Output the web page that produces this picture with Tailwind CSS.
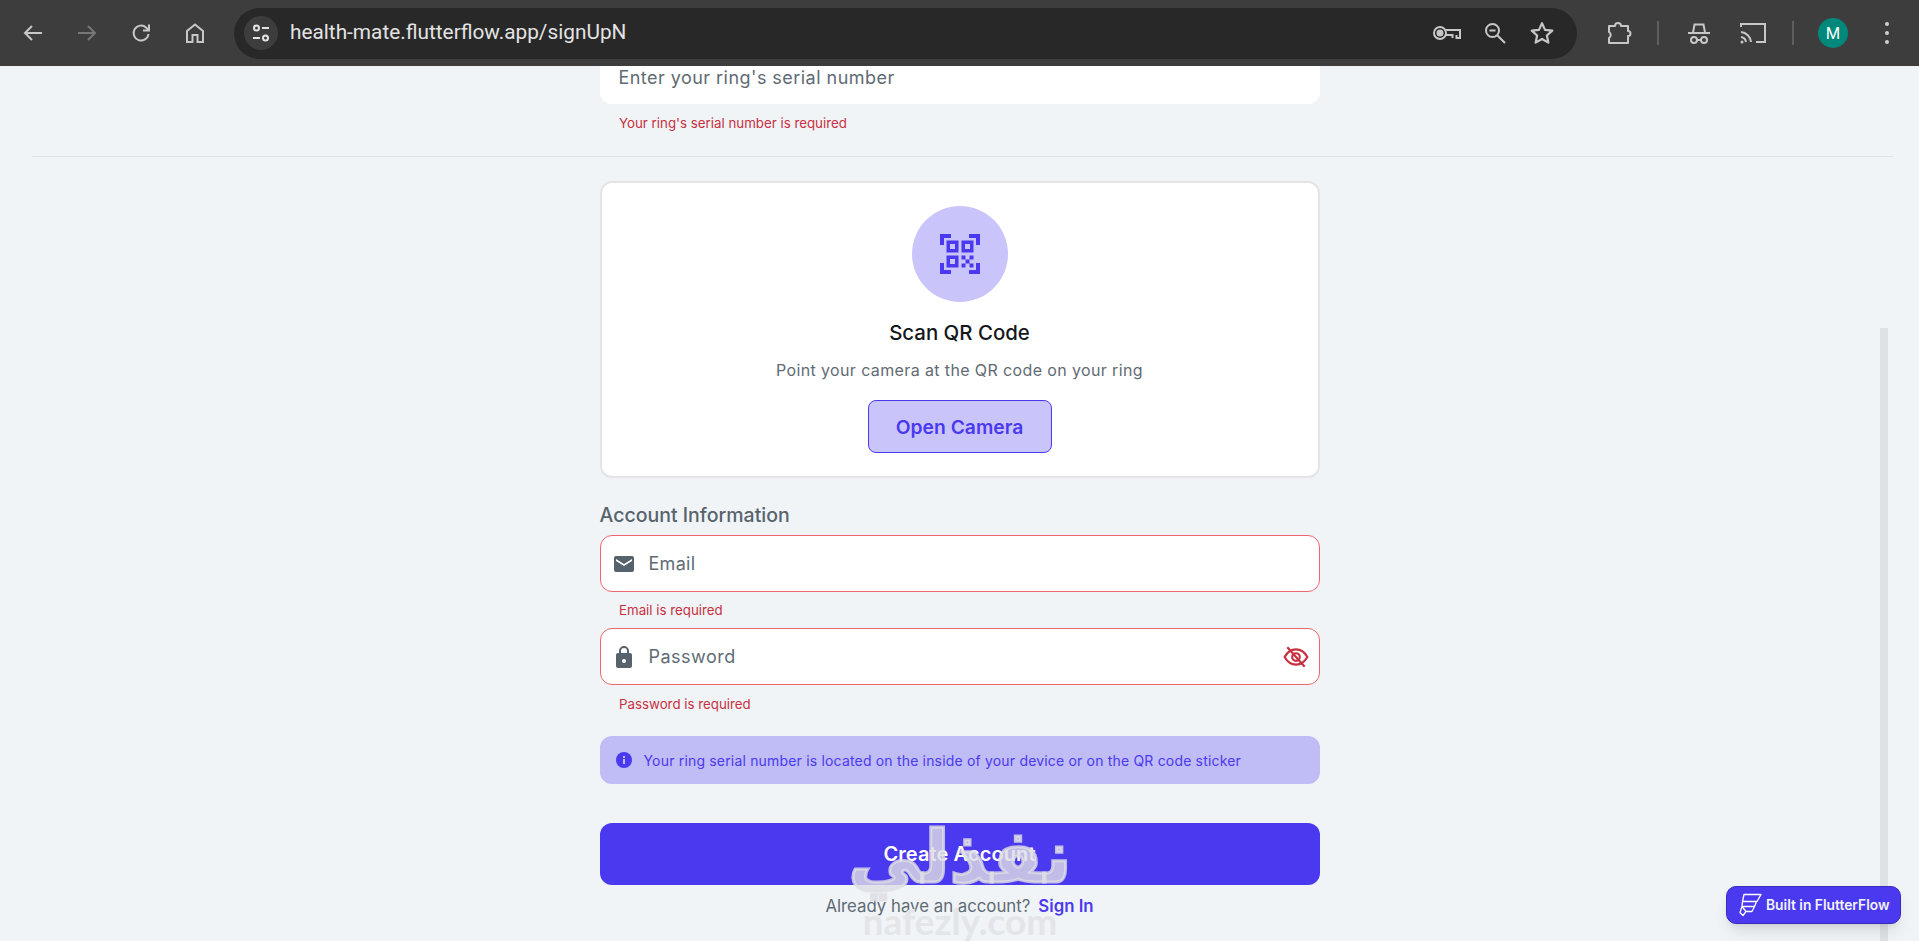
<!DOCTYPE html>
<html lang="en">
<head>
<meta charset="utf-8">
<title>Sign up</title>
<script src="https://cdn.jsdelivr.net/npm/@tailwindcss/browser@4"></script>
</head>
<body class="m-0 h-[941px] w-[1919px] overflow-hidden bg-[#f0f4f7] font-['Inter',sans-serif]">
<header class="flex h-[66px] items-center bg-[#3d3d3d] pl-[6px] text-[#c7c7c7]">
  <div class="flex h-[40px] w-[54px] items-center justify-center">
    <svg class="h-[24px] w-[24px]" viewBox="0 0 24 24" fill="none" stroke="currentColor" stroke-width="2"><path d="M21 12H4M11 5l-7 7 7 7"/></svg>
  </div>
  <div class="flex h-[40px] w-[54px] items-center justify-center text-[#777777]">
    <svg class="h-[24px] w-[24px]" viewBox="0 0 24 24" fill="none" stroke="currentColor" stroke-width="2"><path d="M3 12h17M13 5l7 7-7 7"/></svg>
  </div>
  <div class="flex h-[40px] w-[54px] items-center justify-center">
    <svg class="h-[24px] w-[24px]" viewBox="0 0 24 24" fill="none" stroke="currentColor" stroke-width="2"><path d="M19.500 13a7.500 7.500 0 1 1-2.200-6.300L20 9.200M20 3.500v6h-6"/></svg>
  </div>
  <div class="flex h-[40px] w-[54px] items-center justify-center">
    <svg class="h-[24px] w-[24px]" viewBox="0 0 24 24" fill="none" stroke="currentColor" stroke-width="2"><path d="M4 21V10l8-6.500 8 6.500v11h-5.500v-7h-5v7z"/></svg>
  </div>
  <div class="ml-[12px] flex h-[51px] w-[1343px] items-center rounded-full bg-[#282828] pl-[10px] pr-[12px]">
    <div class="flex h-[34px] w-[34px] items-center justify-center rounded-full bg-[#3d3d3d]">
      <svg class="h-[20px] w-[20px]" viewBox="0 0 20 20" fill="none" stroke="#e3e3e3" stroke-width="2"><circle cx="5.500" cy="5" r="2.500"/><path d="M11 5h7M2 15h7"/><circle cx="14.500" cy="15" r="2.500"/></svg>
    </div>
    <span class="ml-[12px] font-['Roboto',sans-serif] text-[20.800px] text-[#e3e3e3]">health-mate.flutterflow.app/signUpN</span>
    <div class="ml-auto flex items-center">
      <div class="flex h-[40px] w-[49px] items-center justify-center">
        <svg class="h-[16px] w-[28px]" viewBox="0 0 28 16" fill="none" stroke="currentColor" stroke-width="2"><circle cx="7" cy="8" r="6"/><circle cx="7" cy="8" r="2.500" fill="currentColor"/><path d="M13 5h14v8h-3.500v-3M19.500 13v-3H13"/></svg>
      </div>
      <div class="flex h-[40px] w-[47px] items-center justify-center">
        <svg class="h-[24px] w-[24px]" viewBox="0 0 24 24" fill="none" stroke="currentColor" stroke-width="2"><circle cx="9.500" cy="9.500" r="6.500"/><path d="M14.500 14.500L22 22M6.500 9.500h6"/></svg>
      </div>
      <div class="flex h-[40px] w-[47px] items-center justify-center">
        <svg class="h-[26px] w-[26px]" viewBox="0 0 24 24" fill="none" stroke="currentColor" stroke-width="2" stroke-linejoin="round"><path d="M12 3l2.800 6.100 6.700.7-5 4.500 1.400 6.600-5.900-3.400-5.900 3.400 1.400-6.600-5-4.500 6.700-.7z"/></svg>
      </div>
    </div>
  </div>
  <div class="ml-[22px] flex h-[40px] w-[40px] items-center justify-center">
    <svg class="h-[26px] w-[26px]" viewBox="0 0 26 26" fill="none" stroke="currentColor" stroke-width="2" stroke-linejoin="round"><path d="M3 6h6a3 3 0 0 1 6 0h7v5a2.500 2.500 0 0 1 0 5v7H3v-5a3.500 3.500 0 0 0 0-6z"/></svg>
  </div>
  <div class="ml-[18px] h-[24px] w-[2px] bg-[#5e5e5e]"></div>
  <div class="ml-[20px] flex h-[40px] w-[40px] items-center justify-center">
    <svg class="h-[26px] w-[26px]" viewBox="0 0 26 26" fill="none" stroke="currentColor" stroke-width="2"><path d="M2 13h22"/><path d="M7 12.500l1.500-8h9l1.500 8"/><circle cx="8" cy="20" r="3"/><circle cx="18" cy="20" r="3"/><path d="M11 20h4"/></svg>
  </div>
  <div class="ml-[14px] flex h-[40px] w-[40px] items-center justify-center">
    <svg class="h-[28px] w-[28px]" viewBox="0 0 28 28" fill="none" stroke="currentColor" stroke-width="2"><path d="M2 8V5h24v18h-9M2 13a11 11 0 0 1 10 10M2 18a6 6 0 0 1 5 5"/><circle cx="3" cy="23" r="1.500" fill="currentColor" stroke="none"/></svg>
  </div>
  <div class="ml-[19px] h-[24px] w-[2px] bg-[#5e5e5e]"></div>
  <div class="ml-[24px] flex h-[30px] w-[30px] items-center justify-center rounded-full bg-[#00897b] text-[16px] text-white">M</div>
  <div class="ml-[27px] flex w-[24px] flex-col items-center gap-[5px]">
    <span class="h-[4px] w-[4px] rounded-full bg-[#d0d0d0]"></span>
    <span class="h-[4px] w-[4px] rounded-full bg-[#d0d0d0]"></span>
    <span class="h-[4px] w-[4px] rounded-full bg-[#d0d0d0]"></span>
  </div>
</header>

<main class="relative h-[875px] overflow-hidden">
  <div class="absolute bottom-0 left-[1880px] top-[262px] w-[8px] bg-[#dfe2e5]"></div>

  <section class="mx-auto w-[720px]">
    <div class="flex h-[38px] items-start rounded-b-[12px] bg-white pl-[19px] text-[18px] leading-[24px] tracking-[0.46px] text-[#5f6b74]">Enter your ring's serial number</div>
    <p class="ml-[19.500px] mt-[10px] text-[13.300px] leading-[18px] text-[#c8303f]">Your ring's serial number is required</p>
  </section>
  <div class="mx-[32px] mt-[24px] h-px w-[1861px] bg-[#e0e3e7]"></div>

  <section class="mx-auto w-[720px]">
    <div class="mt-[24px] flex h-[297px] flex-col items-center rounded-[12px] border-2 border-[#e2e4e6] bg-white pt-[23px]">
      <div class="flex h-[96px] w-[96px] items-center justify-center rounded-full bg-[#c9c5fb]">
        <svg class="h-[40px] w-[40px]" viewBox="0 0 40 40" fill="#4b39ef">
          <path d="M0 0h11v4H4v7H0zM29 0h11v11h-4V4h-7zM0 29h4v7h7v4H0zM36 29h4v11H29v-4h7z"/>
          <path fill-rule="evenodd" d="M6.500 6.500h12v12h-12zM10 10v5h5v-5zM21.500 6.500h12v12h-12zM25 10v5h5v-5zM6.500 21.500h12v12h-12zM10 25v5h5v-5z"/>
          <path d="M21.500 21.500h4v4h-4zM29.500 21.500h4v4h-4zM25.500 25.500h4v4h-4zM21.500 29.500h4v4h-4zM29.500 29.500h4v4h-4z"/>
        </svg>
      </div>
      <h2 class="mt-[18px] text-[20.400px] font-medium leading-[26px] text-[#14181b]">Scan QR Code</h2>
      <p class="mt-[14px] text-[16px] leading-[20px] tracking-[0.38px] text-[#5f6b74]">Point your camera at the QR code on your ring</p>
      <button class="mt-[20px] flex h-[53px] w-[184px] items-center justify-center rounded-[8px] border border-[#4b39ef] bg-[#c9c5fb] pt-[1px] text-[19.300px] font-semibold text-[#4b39ef]">Open Camera</button>
    </div>

    <h3 class="mt-[25px] text-[19.500px] font-medium leading-[24px] text-[#57636c]">Account Information</h3>

    <div class="mt-[8px] flex h-[57px] items-center rounded-[12px] border border-[#f0646e] bg-white pl-[13px] pr-[12px]">
      <svg class="h-[16px] w-[20px]" viewBox="0 0 20 16" fill="#57636c"><path d="M2 0h16a2 2 0 0 1 2 2v12a2 2 0 0 1-2 2H2a2 2 0 0 1-2-2V2a2 2 0 0 1 2-2zm0 3v2l8 5 8-5V3l-8 5z" fill-rule="evenodd"/></svg>
      <span class="ml-[15px] text-[18px] font-normal tracking-[0.3px] text-[#5f6b74]">Email</span>
    </div>
    <p class="ml-[19.500px] mt-[9px] text-[13.300px] leading-[18px] text-[#c8303f]">Email is required</p>

    <div class="mt-[9px] flex h-[57px] items-center rounded-[12px] border border-[#f0646e] bg-white pl-[15px] pr-[10px]">
      <svg class="h-[22px] w-[16px]" viewBox="0 0 16 22" fill="#57636c"><path fill-rule="evenodd" d="M3 7V5a5 5 0 0 1 10 0v2h1a2 2 0 0 1 2 2v11a2 2 0 0 1-2 2H2a2 2 0 0 1-2-2V9a2 2 0 0 1 2-2zm2 0h6V5a3 3 0 0 0-6 0zm3 6a2 2 0 1 0 0 4 2 2 0 0 0 0-4z"/></svg>
      <span class="ml-[17px] text-[18px] tracking-[0.5px] text-[#5f6b74]">Password</span>
      <svg class="ml-auto h-[26px] w-[26px]" viewBox="0 0 24 24" fill="none" stroke="#c8303f" stroke-width="2"><path d="M1.500 12C4 7.500 7.500 5 12 5s8 2.500 10.500 7C20 16.500 16.500 19 12 19S4 16.500 1.500 12z"/><circle cx="12" cy="12" r="3.500"/><path d="M4 3l16 18"/></svg>
    </div>
    <p class="ml-[19.500px] mt-[10px] text-[13.300px] leading-[18px] text-[#c8303f]">Password is required</p>

    <div class="mt-[23px] flex h-[48px] items-center rounded-[12px] bg-[#bfbcf6] pl-[16px]">
      <svg class="h-[16px] w-[16px]" viewBox="0 0 16 16"><circle cx="8" cy="8" r="8" fill="#4b39ef"/><rect x="7" y="7" width="2" height="5" fill="#bfbcf6"/><rect x="7" y="4" width="2" height="2" fill="#bfbcf6"/></svg>
      <span class="ml-[12px] text-[14px] tracking-[0.18px] text-[#4b39ef]">Your ring serial number is located on the inside of your device or on the QR code sticker</span>
    </div>

    <button class="mt-[39px] flex h-[62px] w-full items-center justify-center rounded-[12px] bg-[#4b39ef] text-[20px] font-semibold tracking-[0.1px] text-white">Create Account</button>

    <p class="mt-[9px] flex justify-center gap-[8px] text-[16.800px] leading-[24px] text-[#5f6b74]">
      <span>Already have an account?</span>
      <span class="font-semibold text-[#4b39ef]">Sign In</span>
    </p>
  </section>

  <div class="pointer-events-none absolute left-[844px] top-[756px] w-[232px] text-center text-[rgba(222,222,228,0.8)]">
    <div dir="rtl" class="h-[70px] font-['DejaVu_Sans',sans-serif] text-[73px] font-bold leading-[70px] [-webkit-text-stroke:3px_rgba(222,222,228,0.8)]">نفذلي</div>
    <div class="mt-[11px] font-['Lato',sans-serif] text-[37px] font-bold leading-[36px] text-[#e3e5e8]">nafezly.com</div>
  </div>

  <div class="absolute left-[1726px] top-[820px] flex h-[38px] w-[175px] items-center rounded-[10px] border border-[#3a2bc0] bg-[#4b39ef] pl-[11px] shadow-lg">
    <svg class="h-[24px] w-[24px]" viewBox="0 0 24 24" fill="none" stroke="white" stroke-width="1.300" stroke-linejoin="round"><path d="M6 1.500h17l-4 7H4.500zM4.500 8.500h14l-2 5H4zM4 13.500h12.500l-2.500 5H8zM4 13.500l4 5-3 4-3-3z"/></svg>
    <span class="ml-[4px] font-['Inter',sans-serif] text-[13.800px] font-semibold text-[#f1f4f8]">Built in FlutterFlow</span>
  </div>
</main>
</body>
</html>
